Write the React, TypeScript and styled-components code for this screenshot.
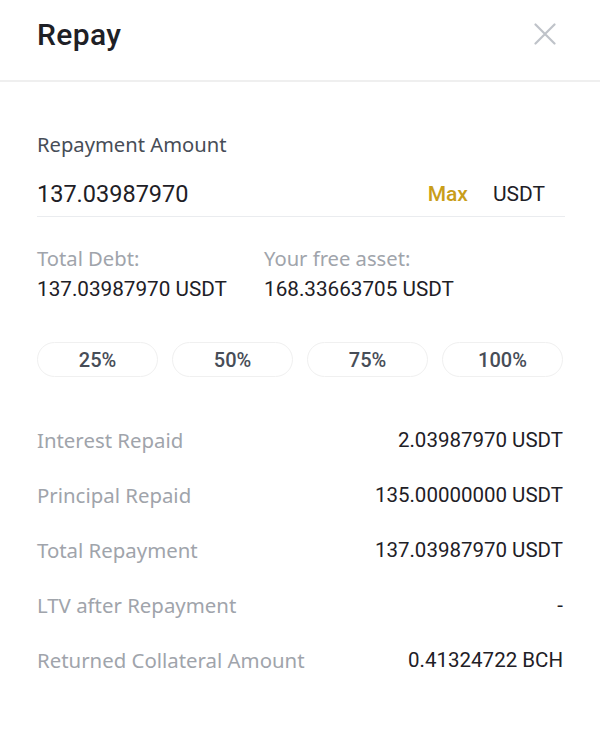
import React from "react";
import styled, { createGlobalStyle } from "styled-components";

const Global = createGlobalStyle`
  html, body { margin: 0; padding: 0; background: #fff; }
  body { font-family: Roboto, "Noto Sans", sans-serif; -webkit-font-smoothing: antialiased; }
  * { box-sizing: border-box; }
`;

const labelFont = `"Noto Sans", Roboto, sans-serif`;

const Page = styled.div`
  width: 600px;
  height: 738px;
  background: #fff;
  display: flex;
  flex-direction: column;
`;

const Header = styled.header`
  height: 82px;
  padding: 0 37px 12px;
  display: flex;
  align-items: center;
  justify-content: space-between;
  border-bottom: 2px solid #efefef;
`;

const Title = styled.h1`
  margin: 0;
  font-size: 30px;
  font-weight: 500;
  color: #1e2026;
  letter-spacing: 0.4px;
`;

const CloseButton = styled.button`
  border: none;
  background: none;
  padding: 0;
  width: 22px;
  height: 22px;
  margin-right: 7px;
  display: flex;
  align-items: center;
  justify-content: center;
  cursor: pointer;
`;

const Body = styled.div`
  padding: 50px 37px 0;
  display: flex;
  flex-direction: column;
`;

const FieldLabel = styled.div`
  font-family: ${labelFont};
  font-size: 20.2px;
  color: #474d57;
  line-height: 24px;
`;

const InputRow = styled.div`
  margin-top: 21px;
  height: 40px;
  display: flex;
  align-items: center;
  border-bottom: 1px solid #eaecef;
  padding-bottom: 6px;
  margin-right: -2px;
`;

const AmountValue = styled.div`
  flex: 1;
  font-size: 23.5px;
  color: #1e2026;
`;

const MaxLink = styled.span`
  font-size: 21px;
  font-weight: 500;
  color: #c99e1a;
  margin-right: 25px;
`;

const Unit = styled.span`
  font-size: 21px;
  color: #1e2026;
  margin-right: 20px;
`;

const InfoGrid = styled.div`
  margin-top: 29px;
  display: grid;
  grid-template-columns: 227px 1fr;
  row-gap: 7px;
`;

const InfoLabel = styled.div`
  font-family: ${labelFont};
  font-size: 20.2px;
  color: #a0a4ab;
  line-height: 24px;
`;

const InfoValue = styled.div`
  font-size: 20.7px;
  color: #1e2026;
  line-height: 24px;
`;

const Presets = styled.div`
  margin-top: 41px;
  display: grid;
  grid-template-columns: repeat(4, 1fr);
  column-gap: 14px;
`;

const PresetButton = styled.button`
  height: 35px;
  border: 1.5px solid #f0f0f0;
  border-radius: 18px;
  background: #fff;
  font-family: Roboto, "Noto Sans", sans-serif;
  font-size: 20px;
  font-weight: 500;
  color: #474d57;
  cursor: pointer;
`;

const Details = styled.div`
  margin-top: 51px;
  display: flex;
  flex-direction: column;
  gap: 31px;
`;

const DetailRow = styled.div`
  display: flex;
  justify-content: space-between;
  align-items: center;
  height: 24px;
`;

const DetailLabel = styled.span`
  font-family: ${labelFont};
  font-size: 20.4px;
  color: #a0a4ab;
`;

const DetailValue = styled.span`
  font-size: 20.5px;
  color: #1e2026;
`;

const details: [string, string][] = [
  ["Interest Repaid", "2.03987970 USDT"],
  ["Principal Repaid", "135.00000000 USDT"],
  ["Total Repayment", "137.03987970 USDT"],
  ["LTV after Repayment", "-"],
  ["Returned Collateral Amount", "0.41324722 BCH"],
];

export default function App() {
  return (
    <>
      <Global />
      <Page>
        <Header>
          <Title>Repay</Title>
          <CloseButton aria-label="Close">
            <svg width="22" height="22" viewBox="0 0 22 22">
              <path d="M1.5 1.5L20.5 20.5M20.5 1.5L1.5 20.5" stroke="#bfc3c9" strokeWidth="2.2" strokeLinecap="round" />
            </svg>
          </CloseButton>
        </Header>
        <Body>
          <FieldLabel>Repayment Amount</FieldLabel>
          <InputRow>
            <AmountValue>137.03987970</AmountValue>
            <MaxLink>Max</MaxLink>
            <Unit>USDT</Unit>
          </InputRow>
          <InfoGrid>
            <InfoLabel>Total Debt:</InfoLabel>
            <InfoLabel>Your free asset:</InfoLabel>
            <InfoValue>137.03987970 USDT</InfoValue>
            <InfoValue>168.33663705 USDT</InfoValue>
          </InfoGrid>
          <Presets>
            {["25%", "50%", "75%", "100%"].map((p) => (
              <PresetButton key={p}>{p}</PresetButton>
            ))}
          </Presets>
          <Details>
            {details.map(([l, v]) => (
              <DetailRow key={l}>
                <DetailLabel>{l}</DetailLabel>
                <DetailValue>{v}</DetailValue>
              </DetailRow>
            ))}
          </Details>
        </Body>
      </Page>
    </>
  );
}
